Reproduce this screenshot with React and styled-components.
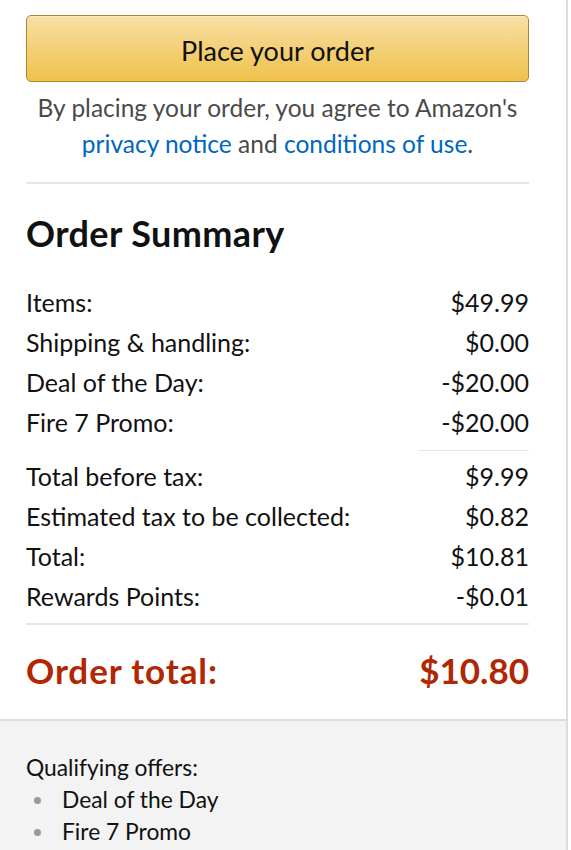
import React from "react";
import styled, { createGlobalStyle } from "styled-components";

const Global = createGlobalStyle`
  html, body { margin: 0; padding: 0; background: #fff; }
  body { font-family: Lato, "Open Sans", Arial, sans-serif; color: #111; }
`;

const Page = styled.div`
  box-sizing: border-box;
  width: 568px;
  min-height: 850px;
  border-right: 2px solid #ddd;
  display: flex;
  flex-direction: column;
`;

const Top = styled.div`
  padding: 15px 37px 0 26px;
  background: #fff;
`;

const OrderButton = styled.button`
  width: 100%;
  height: 67px;
  padding: 3px 0 0;
  border: 1px solid #a88734;
  border-radius: 5px;
  background: linear-gradient(to bottom, #f7dfa5, #f0c14b);
  box-shadow: inset 0 1px 0 rgba(255, 255, 255, 0.4);
  font-family: inherit;
  font-size: 27px;
  color: #111;
  cursor: pointer;
`;

const Agree = styled.p`
  margin: 8px 0 0;
  text-align: center;
  font-size: 24.5px;
  line-height: 36px;
  color: #4a4a4a;
`;

const Link = styled.a`
  color: #0066c0;
  text-decoration: none;
`;

const Divider = styled.hr`
  margin: ${(p) => p.$mt || 0}px 0 0 ${(p) => p.$ml || 0}px;
  border: 0;
  border-top: ${(p) => p.$w || 2}px solid #e7e7e7;
  height: 0;
`;

const Heading = styled.h2`
  margin: 29px 0 0;
  font-size: 36px;
  line-height: 40px;
  font-weight: 700;
  letter-spacing: 0.4px;
`;

const Rows = styled.div`
  margin-top: ${(p) => p.$mt}px;
  display: flex;
  flex-direction: column;
`;

const Row = styled.div`
  display: flex;
  justify-content: space-between;
  font-size: 25px;
  line-height: 40px;
`;

const TotalRow = styled.div`
  display: flex;
  justify-content: space-between;
  margin-top: 23px;
  padding-bottom: 27px;
  font-size: 35px;
  line-height: 44px;
  font-weight: 700;
  color: #b12704;
`;

const TotalLabel = styled.span`
  letter-spacing: 0.9px;
`;

const Offers = styled.div`
  flex: 1;
  background: #f3f3f3;
  border-top: 2px solid #ddd;
  padding: 30px 26px 0;
  font-size: 22.8px;
  line-height: 32px;
`;

const List = styled.ul`
  margin: 0;
  padding: 0;
  list-style: none;
`;

const Item = styled.li`
  display: flex;
  align-items: center;
  &::before {
    content: "";
    flex: none;
    width: 7px;
    height: 7px;
    border-radius: 50%;
    background: #999;
    margin: 2px 21px 0 8px;
  }
`;

const first = [
  ["Items:", "$49.99"],
  ["Shipping & handling:", "$0.00"],
  ["Deal of the Day:", "-$20.00"],
  ["Fire 7 Promo:", "-$20.00"],
];
const second = [
  ["Total before tax:", "$9.99"],
  ["Estimated tax to be collected:", "$0.82"],
  ["Total:", "$10.81"],
  ["Rewards Points:", "-$0.01"],
];

export default function App() {
  return (
    <Page>
      <Global />
      <Top>
        <OrderButton>Place your order</OrderButton>
        <Agree>
          By placing your order, you agree to Amazon's{" "}
          <Link href="#">privacy notice</Link> and{" "}
          <Link href="#">conditions of use</Link>.
        </Agree>
        <Divider $mt={20} />
        <Heading>Order Summary</Heading>
        <Rows $mt={29}>
          {first.map(([l, v]) => (
            <Row key={l}>
              <span>{l}</span>
              <span>{v}</span>
            </Row>
          ))}
        </Rows>
        <Divider $mt={8} $ml={392} $w={1} />
        <Rows $mt={5}>
          {second.map(([l, v]) => (
            <Row key={l}>
              <span>{l}</span>
              <span>{v}</span>
            </Row>
          ))}
        </Rows>
        <Divider $mt={7} />
        <TotalRow>
          <TotalLabel>Order total:</TotalLabel>
          <span>$10.80</span>
        </TotalRow>
      </Top>
      <Offers>
        <div>Qualifying offers:</div>
        <List>
          <Item>Deal of the Day</Item>
          <Item>Fire 7 Promo</Item>
        </List>
      </Offers>
    </Page>
  );
}
